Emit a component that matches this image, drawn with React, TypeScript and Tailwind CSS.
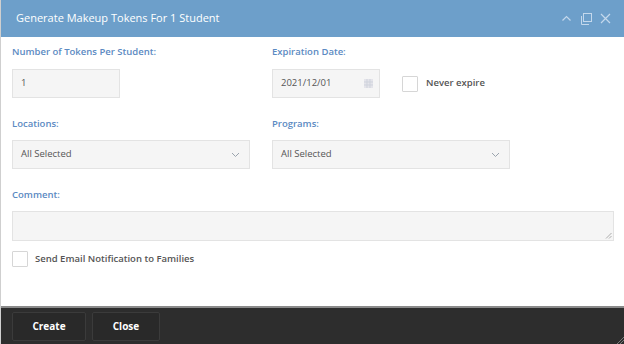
import React from "react";

const font = { fontFamily: '"Open Sans", "Noto Sans", sans-serif' };

function Label({ children }: { children: React.ReactNode }) {
  return (
    <div className="h-[16px] text-[9.5px] leading-[16px] font-semibold text-[#5b8ac2]">{children}</div>
  );
}

function Checkbox() {
  return <div className="w-[16px] h-[16px] bg-white border border-[#d6d6d6] rounded-[1px] shrink-0" />;
}

function Chevron() {
  return (
    <svg width="9" height="6" viewBox="0 0 9 6" className="text-[#9aa4ae]">
      <path d="M1 1l3.5 3.5L8 1" fill="none" stroke="currentColor" strokeWidth="1" />
    </svg>
  );
}

export default function App() {
  return (
    <div className="w-[624px] h-[344px] flex flex-col bg-white border-l border-[#cfcfcf] overflow-hidden" style={font}>
      {/* Header */}
      <div className="h-[37px] shrink-0 bg-[#6d9fca] flex items-center pl-[15px] pr-[13px]">
        <div className="text-white text-[11px] flex-1">Generate Makeup Tokens For 1 Student</div>
        <div className="flex items-center gap-[8px] text-[#c4d8ec]">
          <svg width="11" height="11" viewBox="0 0 11 11">
            <path d="M1.5 7.5l4-4 4 4" fill="none" stroke="currentColor" strokeWidth="1.2" />
          </svg>
          <svg width="12" height="12" viewBox="0 0 12 12">
            <rect x="3.5" y="0.5" width="8" height="8" fill="none" stroke="currentColor" strokeWidth="1" />
            <path d="M1.5 3v8.5H9" fill="none" stroke="currentColor" strokeWidth="1" />
          </svg>
          <svg width="11" height="11" viewBox="0 0 11 11">
            <path d="M1 1l9 9M10 1l-9 9" fill="none" stroke="currentColor" strokeWidth="1.2" />
          </svg>
        </div>
      </div>

      {/* Body */}
      <div className="flex-1 pl-[11px] pr-[10px] pt-[7px] text-[#555]">
        <div className="grid grid-cols-[238px_238px] gap-x-[22px]">
          <div>
            <Label>Number of Tokens Per Student:</Label>
            <div className="mt-[9px] w-[108px] h-[29px] bg-[#f5f5f5] border border-[#e3e3e3] flex items-center pl-[8px] text-[9.5px] text-[#555]">
              1
            </div>
          </div>
          <div>
            <Label>Expiration Date:</Label>
            <div className="mt-[9px] flex items-center">
              <div className="w-[108px] h-[29px] bg-[#f5f5f5] border border-[#e3e3e3] flex items-center pl-[8px] pr-[6px] text-[9.5px] text-[#555]">
                <span className="flex-1">2021/12/01</span>
                <svg width="9" height="9" viewBox="0 0 9 9">
                  <rect x="0" y="0" width="9" height="9" fill="#e4e4ea" />
                  <path d="M3 0v9M6 0v9M0 3h9M0 6h9" stroke="#cfd3dc" strokeWidth="1" />
                </svg>
              </div>
              <div className="ml-[22px] flex items-center gap-[8px]">
                <Checkbox />
                <span className="text-[9.5px] font-semibold text-[#555]">Never expire</span>
              </div>
            </div>
          </div>

          <div className="mt-[18px]">
            <Label>Locations:</Label>
            <div className="mt-[8px] h-[29px] bg-[#f5f5f5] border border-[#e3e3e3] flex items-center pl-[8px] pr-[9px] text-[9.5px] text-[#555]">
              <span className="flex-1">All Selected</span>
              <Chevron />
            </div>
          </div>
          <div className="mt-[18px]">
            <Label>Programs:</Label>
            <div className="mt-[8px] h-[29px] bg-[#f5f5f5] border border-[#e3e3e3] flex items-center pl-[8px] pr-[9px] text-[9.5px] text-[#555]">
              <span className="flex-1">All Selected</span>
              <Chevron />
            </div>
          </div>
        </div>

        <div className="mt-[18px]">
          <Label>Comment:</Label>
          <div className="relative mt-[8px] h-[30px] bg-[#f5f5f5] border border-[#e3e3e3]">
            <svg width="7" height="7" viewBox="0 0 7 7" className="absolute right-[1px] bottom-[1px]">
              <path d="M1 6.5L6.5 1M4 6.5L6.5 4" stroke="#9a9a9a" strokeWidth="0.8" />
            </svg>
          </div>
        </div>

        <div className="mt-[10px] flex items-center gap-[7px]">
          <Checkbox />
          <span className="text-[9.5px] font-semibold text-[#555]">Send Email Notification to Families</span>
        </div>
      </div>

      {/* Footer */}
      <div className="relative h-[38px] shrink-0 bg-[#2d2d2d] border-t-2 border-[#8a8a8a] flex items-center pl-[11px] gap-[6px]">
        <button className="w-[74px] h-[29px] bg-[#292929] border border-[#3b3b3b] rounded-[2px] text-white text-[10px] font-bold">
          Create
        </button>
        <button className="w-[68px] h-[29px] bg-[#292929] border border-[#3b3b3b] rounded-[2px] text-white text-[10px] font-bold">
          Close
        </button>
        <svg width="8" height="8" viewBox="0 0 8 8" className="absolute right-0 bottom-0">
          <path d="M1 8L8 1M4 8L8 4" stroke="#7a7a7a" strokeWidth="1" />
        </svg>
      </div>
    </div>
  );
}
